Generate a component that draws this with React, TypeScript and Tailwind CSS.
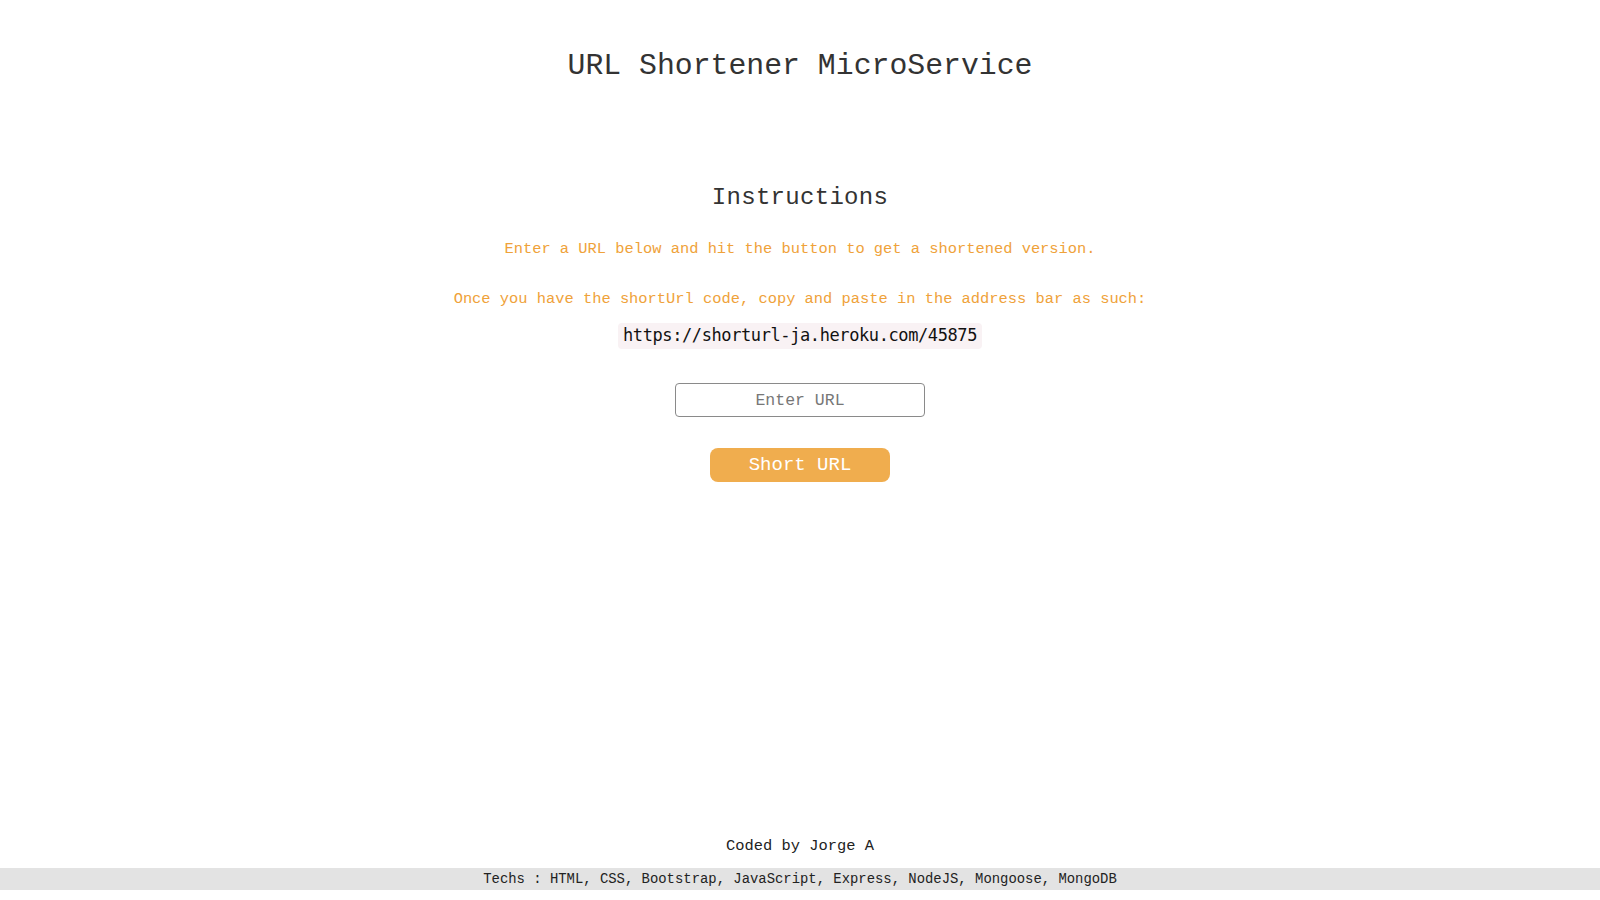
export default function App() {
  const serif = "font-['Liberation_Mono','DejaVu_Sans_Mono',monospace]";
  return (
    <div className={`min-h-screen flex flex-col bg-white text-[#333] ${serif}`}>
      <main className="flex flex-col items-center flex-1">
        <h1 className="pt-[48px] text-[29.8px] leading-[36px]">URL Shortener MicroService</h1>

        <h2 className="mt-[99px] text-[24px] leading-[30px] tracking-[0.3px]">Instructions</h2>

        <p className="mt-[26px] text-[15.4px] leading-[20px] text-[#efa23a]">
          Enter a URL below and hit the button to get a shortened version.
        </p>
        <p className="mt-[30px] text-[15.4px] leading-[20px] text-[#efa23a]">
          Once you have the shortUrl code, copy and paste in the address bar as such:
        </p>
        <code className="mt-[14px] h-[26px] px-[5px] flex items-center rounded-[4px] bg-[#f9f2f4] text-[#111] text-[17px] font-['DejaVu_Sans_Mono',monospace] tracking-[-0.4px]">
          https://shorturl-ja.heroku.com/45875
        </code>

        <input
          type="text"
          placeholder="Enter URL"
          className="mt-[34px] w-[250px] h-[34px] rounded-[4px] border border-[#8a8a8a] text-center text-[16.5px] placeholder:text-[#777] outline-none"
        />

        <button className="mt-[31px] w-[180px] h-[34px] rounded-[8px] bg-[#f0ad4e] text-white text-[19px] leading-none">
          Short URL
        </button>
      </main>

      <footer className="flex flex-col items-center pb-[10px]">
        <p className="text-[15.4px] leading-[20px] text-[#222]">Coded by Jorge A</p>
        <div className="mt-[12px] w-full h-[22px] bg-[#e3e3e3] flex items-center justify-center text-[13.9px] text-[#222]">
          Techs : HTML, CSS, Bootstrap, JavaScript, Express, NodeJS, Mongoose, MongoDB
        </div>
      </footer>
    </div>
  );
}
